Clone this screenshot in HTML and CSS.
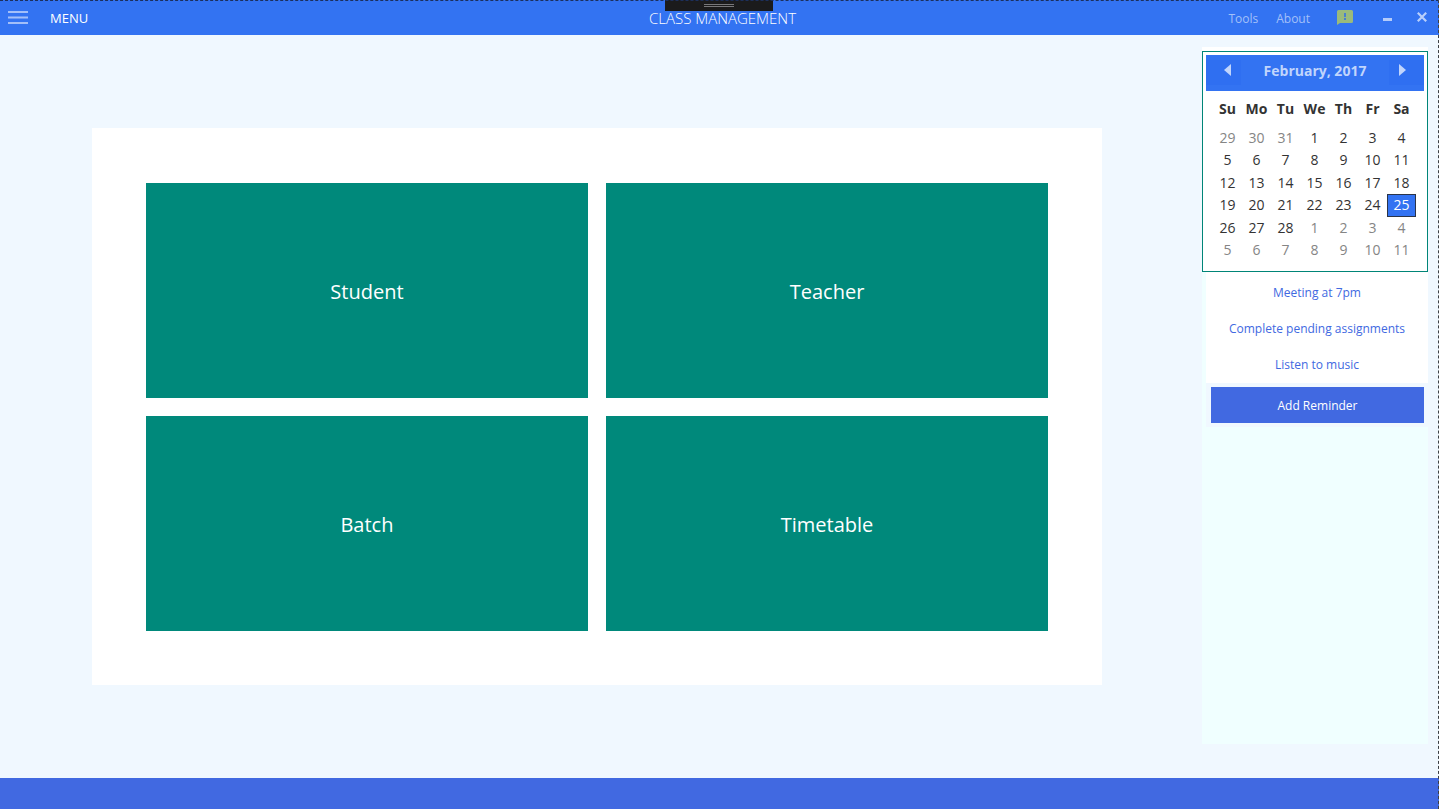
FILE: index.html
```html
<!DOCTYPE html>
<html lang="en">
<head>
<meta charset="utf-8">
<title>Class Management</title>
<link rel="stylesheet" href="styles.css">
</head>
<body>
<div class="window">
  <header class="titlebar">
    <div class="titlebar-left">
      <button class="icon-button" aria-label="Open menu">
        <svg width="20" height="14" viewBox="0 0 20 14" shape-rendering="crispEdges"><path fill="#a3bff9" d="M0 0h20v2H0zM0 6h20v1H0zM0 11h20v2H0z"/><path fill="#6d9af5" d="M0 5h20v1H0zM0 7h20v1H0z"/></svg>
      </button>
      <span class="menu-label">MENU</span>
    </div>
    <h1 class="app-title">CLASS MANAGEMENT</h1>
    <nav class="titlebar-right">
      <button class="nav-button">Tools</button>
      <button class="nav-button">About</button>
      <button class="icon-button feedback" aria-label="Feedback">
        <svg width="16" height="15" viewBox="0 0 16 15"><path fill="#9aba7c" d="M1.500 0h13Q16 0 16 1.500v10q0 1.500-1.500 1.500H3L0 15V1.500Q0 0 1.500 0z"/><path fill="#4a7fd0" d="M7 3h2v4H7zM7 8h2v2H7z"/></svg>
      </button>
      <button class="icon-button minimize" aria-label="Minimize">
        <svg width="9" height="3" viewBox="0 0 9 3"><path fill="#b4cbfa" d="M0 0h9v3H0z"/></svg>
      </button>
      <button class="icon-button close" aria-label="Close">
        <svg width="10" height="10" viewBox="0 0 10 10"><path stroke="#b9cffb" stroke-width="2.200" d="M.8.800l8.400 8.400M9.200.800L.8 9.200"/></svg>
      </button>
    </nav>
    <div class="grip"><span class="grip-lines"></span></div>
  </header>

  <div class="content">
    <main class="stage">
      <div class="panel">
        <button class="tile">Student</button>
        <button class="tile">Teacher</button>
        <button class="tile">Batch</button>
        <button class="tile">Timetable</button>
      </div>
    </main>

    <aside class="sidebar">
      <section class="calendar">
        <div class="calendar-head">
          <button class="month-button" aria-label="Previous month"><svg width="7" height="12" viewBox="0 0 7 12"><path fill="#c1d5fc" d="M7 0v12L0 6z"/></svg></button>
          <span class="month">February, 2017</span>
          <button class="month-button" aria-label="Next month"><svg width="7" height="12" viewBox="0 0 7 12"><path fill="#c1d5fc" d="M0 0v12l7-6z"/></svg></button>
        </div>
        <table class="days">
          <thead><tr><th>Su</th><th>Mo</th><th>Tu</th><th>We</th><th>Th</th><th>Fr</th><th>Sa</th></tr></thead>
          <tbody>
            <tr><td class="other">29</td><td class="other">30</td><td class="other">31</td><td>1</td><td>2</td><td>3</td><td>4</td></tr>
            <tr><td>5</td><td>6</td><td>7</td><td>8</td><td>9</td><td>10</td><td>11</td></tr>
            <tr><td>12</td><td>13</td><td>14</td><td>15</td><td>16</td><td>17</td><td>18</td></tr>
            <tr><td>19</td><td>20</td><td>21</td><td>22</td><td>23</td><td>24</td><td class="selected">25</td></tr>
            <tr><td>26</td><td>27</td><td>28</td><td class="other">1</td><td class="other">2</td><td class="other">3</td><td class="other">4</td></tr>
            <tr><td class="other">5</td><td class="other">6</td><td class="other">7</td><td class="other">8</td><td class="other">9</td><td class="other">10</td><td class="other">11</td></tr>
          </tbody>
        </table>
      </section>
      <ul class="reminders">
        <li>Meeting at 7pm</li>
        <li>Complete pending assignments</li>
        <li>Listen to music</li>
      </ul>
      <div class="add-area"><button class="add-button">Add Reminder</button></div>
    </aside>
  </div>

  <footer class="statusbar"></footer>
  <div class="focus-frame"></div>
</div>
</body>
</html>
```
FILE: styles.css
```css
* { box-sizing: border-box; }

body {
  margin: 0;
  font-family: "Open Sans", "Noto Sans", sans-serif;
  font-size: 12px;
}

button {
  margin: 0;
  padding: 0;
  border: 0;
  background: none;
  color: inherit;
  font: inherit;
}

svg { display: block; }

.window {
  position: relative;
  display: flex;
  flex-direction: column;
  min-height: 100vh;
  background: #f0f8ff;
}

.titlebar {
  position: relative;
  display: grid;
  grid-template-columns: 1fr auto 1fr;
  align-items: center;
  height: 35px;
  padding: 0 12px 0 8px;
  background: #3373f2;
  color: #fff;
}

.titlebar-left {
  display: flex;
  align-items: center;
  gap: 22px;
}

.menu-label { font-size: 13px; }

.app-title {
  margin: 0;
  padding-left: 10px;
  font-size: 15px;
  font-weight: 300;
}

.titlebar-right {
  display: flex;
  align-items: center;
  justify-content: flex-end;
  gap: 18px;
}

.nav-button {
  padding-top: 2px;
  color: #a3c0f9;
  font-size: 12px;
}

.feedback { margin: 0 12px 0 9px; }

.minimize {
  margin-right: 7px;
  padding-top: 4px;
}

.close { padding-bottom: 1px; }

.grip {
  position: absolute;
  top: 0;
  left: 50%;
  width: 108px;
  height: 11px;
  margin-left: -55px;
  padding-top: 4px;
  background: #1b1b1c;
}

.grip-lines {
  display: block;
  width: 30px;
  height: 3px;
  margin: 0 auto;
  border: solid #77777a;
  border-width: 1px 0;
}

.content {
  display: flex;
  flex: 1;
  padding-right: 11px;
}

.stage {
  display: grid;
  place-items: center;
  flex: 1;
  margin-right: 8px;
}

.panel {
  display: grid;
  grid-template-columns: 1fr 1fr;
  grid-template-rows: 1fr 1fr;
  gap: 18px;
  width: 84.6%;
  height: 75%;
  padding: 55px 54px 54px;
  background: #fff;
}

.tile {
  padding-top: 2px;
  background: #00897b;
  color: #fff;
  font-size: 20px;
}

.sidebar {
  width: 226px;
  margin: 12px 0 34px;
  border-top: 4px solid #fff;
  background: #f0ffff;
}

.calendar {
  padding: 3px 3px 9px;
  border: 1px solid #008577;
  background: #fff;
}

.calendar-head {
  display: flex;
  align-items: flex-start;
  justify-content: space-between;
  height: 36px;
  padding-top: 5px;
  background: #3373f2;
  color: #c1d5fc;
}

.month-button {
  display: grid;
  place-items: center;
  width: 35px;
  height: 25px;
  padding: 0 0 6px 8px;
  background: #2f6ff1;
}

.month-button:last-child { padding: 0 8px 6px 0; }

.month {
  font-size: 14px;
  font-weight: 700;
  line-height: 22px;
}

.days {
  width: 203px;
  margin: 0 8px 0 7px;
  border-spacing: 0;
  table-layout: fixed;
  color: #333;
  font-size: 14px;
  line-height: 20px;
  text-align: center;
}

.days th,
.days td { padding: 0; }

.days th { height: 36px; }

.days td {
  height: 22px;
  border: 1px solid transparent;
  vertical-align: top;
}

.days tr:nth-child(even) td { height: 23px; }

.days .other { color: #858585; }

.days .selected {
  border-color: #2b3448;
  background: #3373f2;
  color: #fff;
}

.reminders {
  margin: 0 0 0 4px;
  padding: 3px 0 0;
  background: #fff;
  color: #4169e1;
  list-style: none;
  line-height: 36px;
  text-align: center;
}

.add-area {
  margin-left: 4px;
  padding: 4px 4px 4px 5px;
  background: #f0f8ff;
}

.add-button {
  display: block;
  width: 100%;
  height: 36px;
  background: #4169e1;
  color: #fff;
}

.statusbar {
  height: 31px;
  background: #4169e1;
}

.focus-frame {
  position: absolute;
  inset: 0;
  border-top: 1px dashed #1c2f5c;
  border-right: 1px dashed #3d4045;
  pointer-events: none;
}
```
